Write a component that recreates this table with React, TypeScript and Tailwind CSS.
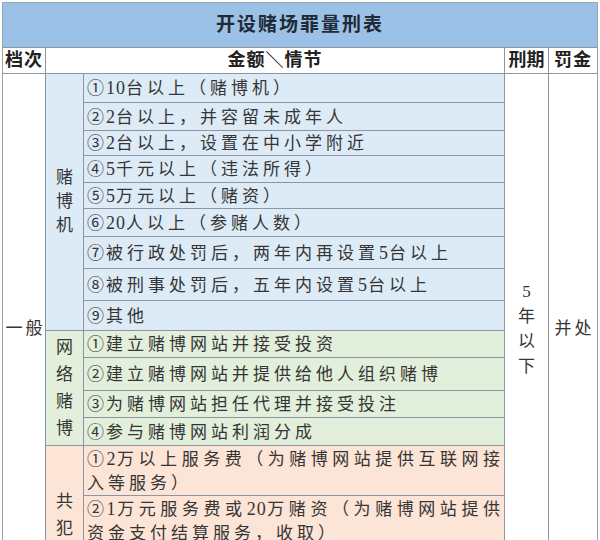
const blueRows: [string, number][] = [
  ['①10台以上（赌博机）', 29],
  ['②2台以上，并容留未成年人', 28],
  ['③2台以上，设置在中小学附近', 25],
  ['④5千元以上（违法所得）', 27],
  ['⑤5万元以上（赌资）', 26],
  ['⑥20人以上（参赌人数）', 28],
  ['⑦被行政处罚后，两年内再设置5台以上', 32],
  ['⑧被刑事处罚后，五年内设置5台以上', 32],
  ['⑨其他', 30],
]

const greenRows: [string, number][] = [
  ['①建立赌博网站并接受投资', 27],
  ['②建立赌博网站并提供给他人组织赌博', 33],
  ['③为赌博网站担任代理并接受投注', 27],
  ['④参与赌博网站利润分成', 28],
]

const pinkRows: [string[], number][] = [
  [['①2万以上服务费（为赌博网站提供互联网接', '入等服务）'], 50],
  [['②1万元服务费或20万赌资（为赌博网站提供', '资金支付结算服务，收取）'], 50],
  [['③其他'], 38],
]

// circled numbers in the CJK face, digit runs with tighter spacing
function Rich({ text }: { text: string }) {
  const parts = text.split(/([①-⑨]|[0-9]+)/).filter(Boolean)
  return (
    <>
      {parts.map((p, i) => {
        if (/^[①-⑨]$/.test(p))
          return (
            <span key={i} className="font-['Noto_Sans_CJK_SC',sans-serif] tracking-[2px]">
              {p}
            </span>
          )
        if (/^[0-9]+$/.test(p))
          return (
            <span key={i} className="tracking-[1px] text-[18px]">
              {p}
            </span>
          )
        return <span key={i}>{p}</span>
      })}
    </>
  )
}

function Vertical({ text, leading }: { text: string; leading: string }) {
  return (
    <div className={`flex flex-col items-center ${leading}`}>
      {text.split('').map((c, i) => (
        <span key={i}>{c}</span>
      ))}
    </div>
  )
}

function Section({
  label,
  labelLeading,
  bg,
  children,
}: {
  label: string
  labelLeading: string
  bg: string
  children: React.ReactNode
}) {
  return (
    <div className={`flex ${bg}`}>
      <div className="w-[38px] shrink-0 border-r border-b border-[#8a96a3] flex items-center justify-center text-[17px]">
        <Vertical text={label} leading={labelLeading} />
      </div>
      <div className="flex-1 flex flex-col">{children}</div>
    </div>
  )
}

export default function App() {
  return (
    <div className="w-[600px] h-[540px] overflow-hidden bg-white pt-[2px] pl-[2px] text-[#353535] font-['Liberation_Serif','Noto_Sans_CJK_SC',serif]">
      <div className="w-[596px] border-l border-r border-t border-[#9aa3ad]">
        {/* title */}
        <div className="h-[45px] bg-[#9bc2e6] border-b border-[#8a96a3] flex items-center justify-center text-[19px] font-bold tracking-[2px] text-[#1f2a36]">
          开设赌场罪量刑表
        </div>

        {/* header */}
        <div className="h-[26px] flex border-b border-[#8a96a3] text-[18px] font-bold text-[#222]">
          <div className="w-[43px] shrink-0 border-r border-[#8a96a3] flex items-center justify-center tracking-[1px]">
            档次
          </div>
          <div className="flex-1 flex items-center justify-center tracking-[1px]">金额＼情节</div>
          <div className="w-[44px] shrink-0 border-l border-[#8a96a3] flex items-center justify-center">
            刑期
          </div>
          <div className="w-[49px] shrink-0 border-l border-[#8a96a3] flex items-center justify-center tracking-[1px]">
            罚金
          </div>
        </div>

        {/* body */}
        <div className="flex text-[17px]">
          <div className="w-[43px] shrink-0 border-r border-[#8a96a3] flex items-center justify-center tracking-[3px] pl-[3px] whitespace-nowrap">
            一般
          </div>

          <div className="flex-1 flex flex-col">
            <Section label="赌博机" labelLeading="leading-[24px]" bg="bg-[#ddebf7]">
              {blueRows.map(([t, h]) => (
                <div
                  key={t}
                  style={{ height: h }}
                  className="border-b border-[#8a96a3] flex items-center pl-[3px] tracking-[4px] whitespace-nowrap"
                >
                  <div>
                    <Rich text={t} />
                  </div>
                </div>
              ))}
            </Section>

            <Section label="网络赌博" labelLeading="leading-[27px]" bg="bg-[#e2efda]">
              {greenRows.map(([t, h]) => (
                <div
                  key={t}
                  style={{ height: h }}
                  className="border-b border-[#8a96a3] flex items-center pl-[3px] tracking-[4px] whitespace-nowrap"
                >
                  <div>
                    <Rich text={t} />
                  </div>
                </div>
              ))}
            </Section>

            <Section label="共犯" labelLeading="leading-[27px]" bg="bg-[#fce4d6]">
              {pinkRows.map(([lines, h]) => (
                <div
                  key={lines[0]}
                  style={{ height: h }}
                  className="border-b border-[#8a96a3] flex flex-col justify-center pl-[3px] tracking-[4px] leading-[24px] whitespace-nowrap"
                >
                  {lines.map((l, i) => (
                    <div
                      key={i}
                      className={i === 0 && lines.length > 1 ? 'text-justify [text-align-last:justify] whitespace-normal' : ''}
                    >
                      <Rich text={l} />
                    </div>
                  ))}
                </div>
              ))}
            </Section>
          </div>

          <div className="w-[44px] shrink-0 border-l border-[#8a96a3] flex items-center justify-center">
            <Vertical text="5年以下" leading="leading-[25px]" />
          </div>
          <div className="w-[49px] shrink-0 border-l border-[#8a96a3] flex items-center justify-center tracking-[3px] pl-[3px] whitespace-nowrap">
            并处
          </div>
        </div>
      </div>
    </div>
  )
}
